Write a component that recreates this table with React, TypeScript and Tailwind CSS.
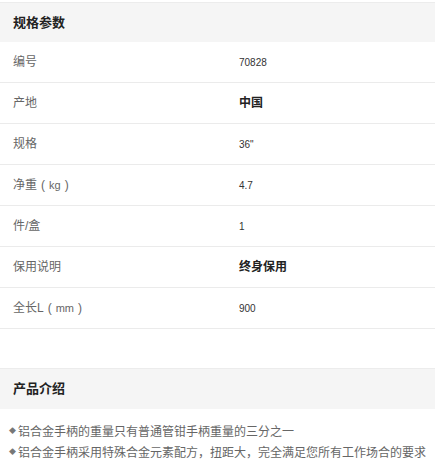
import type { ReactNode } from "react";

// 全角括号：居中显示的半角括号
const Paren = ({ c }: { c: string }) => (
  <span className="inline-block w-[12px] text-center">{c}</span>
);

const specs: { label: ReactNode; value: string; bold?: boolean }[] = [
  { label: "编号", value: "70828" },
  { label: "产地", value: "中国", bold: true },
  { label: "规格", value: "36\"" },
  {
    label: (
      <>
        净重<Paren c="(" />
        <span className="text-[11px]">kg</span>
        <Paren c=")" />
      </>
    ),
    value: "4.7",
  },
  { label: "件/盒", value: "1" },
  { label: "保用说明", value: "终身保用", bold: true },
  {
    label: (
      <>
        全长L<Paren c="(" />
        <span className="text-[11px]">mm</span>
        <Paren c=")" />
      </>
    ),
    value: "900",
  },
];

const intro = [
  "铝合金手柄的重量只有普通管钳手柄重量的三分之一",
  "铝合金手柄采用特殊合金元素配方，扭距大，完全满足您所有工作场合的要求",
];

const font = { fontFamily: '"Liberation Sans", "Noto Sans CJK SC", sans-serif' };

export default function App() {
  return (
    <div className="w-[435px] h-[475px] overflow-hidden bg-white pt-[2px]" style={font}>
      <div className="border-t border-[#ececec] bg-[#f5f5f5] h-[40px] flex items-center px-[13px]">
        <span className="text-[13px] font-bold text-[#222]">规格参数</span>
      </div>

      {specs.map((s, i) => (
        <div key={i} className="flex items-center h-[41px] border-b border-[#ebebeb]">
          <div className="w-[239px] pl-[13px] text-[12px] text-[#666]">{s.label}</div>
          <div
            className={
              s.bold
                ? "text-[12px] font-bold text-[#222]"
                : "text-[10px] text-[#333]"
            }
          >
            {s.value}
          </div>
        </div>
      ))}

      <div className="h-[39px]" />

      <div className="border-t border-[#ececec] bg-[#f5f5f5] h-[41px] flex items-center px-[13px]">
        <span className="text-[13px] font-bold text-[#222]">产品介绍</span>
      </div>

      <div className="pt-[12px] pl-[9px] flex flex-col">
        {intro.map((t) => (
          <div key={t} className="flex items-center h-[21px] text-[12px] text-[#666]">
            <span className="text-[7px] text-[#777] mr-[2px]">◆</span>
            <span>{t}</span>
          </div>
        ))}
      </div>
    </div>
  );
}
